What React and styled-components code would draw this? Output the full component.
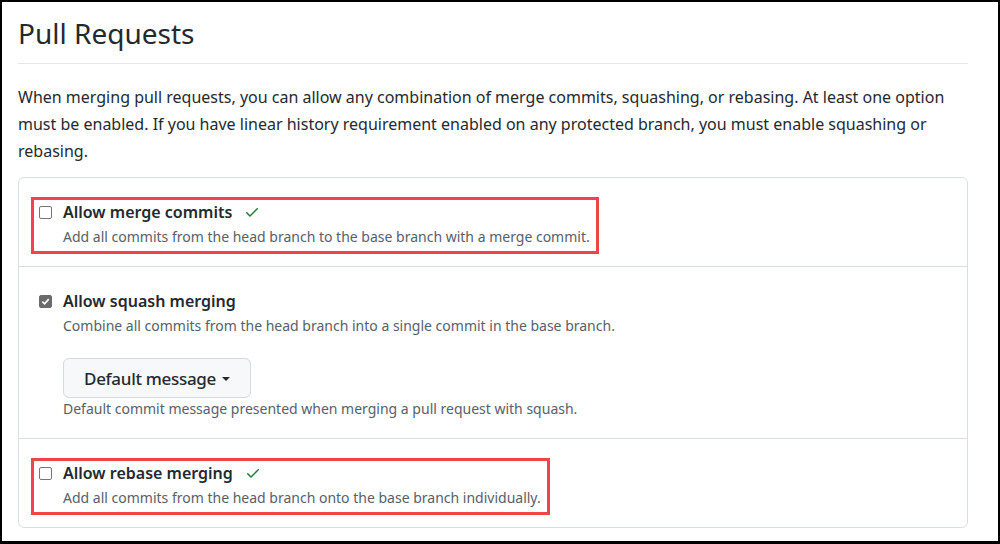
import React from "react";
import styled, { createGlobalStyle } from "styled-components";

const GlobalStyle = createGlobalStyle`
  html, body {
    margin: 0;
    padding: 0;
    background: #fff;
  }
  body {
    font-family: "Noto Sans", "Open Sans", sans-serif;
    color: #24292f;
  }
`;

const Page = styled.div`
  box-sizing: border-box;
  width: 1000px;
  height: 544px;
  border: 2px solid #000;
  border-bottom-width: 3px;
  padding: 0 30px 0 16px;
  overflow: hidden;
`;

const Heading = styled.h2`
  margin: 0;
  padding: 11px 0 10px;
  font-size: 28px;
  font-weight: 400;
  line-height: 40px;
  border-bottom: 1px solid #e4e6e9;
`;

const Intro = styled.p`
  margin: 20px 0 12px;
  font-size: 16px;
  line-height: 27px;
`;

const Box = styled.div`
  border: 1px solid #d8dee4;
  border-radius: 6px;
`;

const Section = styled.div`
  padding: 19px 12px 12px;
  & + & {
    border-top: 1px solid #d8dee4;
  }
`;

const Frame = styled.div`
  display: inline-grid;
  grid-template-columns: 24px auto;
  border: 3px solid ${(p) => (p.$marked ? "#f0434a" : "transparent")};
  padding: 1px 6px 4px 5px;
`;

const Check = styled.span`
  box-sizing: border-box;
  width: 13px;
  height: 13px;
  margin-top: 5px;
  border-radius: 2px;
  border: 1px solid ${(p) => (p.$on ? "#6b6b6b" : "#777")};
  background: ${(p) => (p.$on ? "#6b6b6b" : "#fff")};
  display: flex;
  align-items: center;
  justify-content: center;
`;

const Body = styled.div`
  display: flex;
  flex-direction: column;
  align-items: flex-start;
`;

const Title = styled.div`
  display: flex;
  align-items: center;
  gap: 12px;
  font-size: 16px;
  font-weight: 600;
  line-height: 22px;
`;

const Note = styled.div`
  margin-top: ${(p) => p.$gap || 4}px;
  font-size: 14px;
  line-height: 20px;
  color: #57606a;
`;

const Button = styled.button`
  margin-top: 22px;
  height: 40px;
  padding: 0 20px;
  display: flex;
  align-items: center;
  gap: 6px;
  font-family: inherit;
  font-size: 17px;
  letter-spacing: -0.3px;
  font-weight: 500;
  color: #24292f;
  background: #f6f8fa;
  border: 1px solid #d5d8dc;
  border-radius: 6px;
`;

const Caret = styled.span`
  width: 0;
  height: 0;
  margin-top: 2px;
  border-left: 4px solid transparent;
  border-right: 4px solid transparent;
  border-top: 4px solid #24292f;
`;

const Tick = () => (
  <svg width="16" height="16" viewBox="0 0 16 16" fill="#1a7f37">
    <path d="M13.78 4.22a.75.75 0 0 1 0 1.06l-7.25 7.25a.75.75 0 0 1-1.06 0L2.22 9.28a.75.75 0 0 1 1.06-1.06L6 10.94l6.72-6.72a.75.75 0 0 1 1.06 0Z" />
  </svg>
);

const Box13 = ({ on }) => (
  <Check $on={on}>
    {on && (
      <svg width="9" height="9" viewBox="0 0 10 10">
        <path d="M1.5 5.2 4 7.6 8.6 2.4" fill="none" stroke="#fff" strokeWidth="1.8" />
      </svg>
    )}
  </Check>
);

const Option = ({ marked, on, title, tick, children }) => (
  <Frame $marked={marked}>
    <Box13 on={on} />
    <Body>
      <Title>
        {title}
        {tick && <Tick />}
      </Title>
      {children}
    </Body>
  </Frame>
);

export default function App() {
  return (
    <>
      <GlobalStyle />
      <Page>
        <Heading>Pull Requests</Heading>
        <Intro>
          When merging pull requests, you can allow any combination of merge commits, squashing, or
          rebasing. At least one option must be enabled. If you have linear history requirement
          enabled on any protected branch, you must enable squashing or rebasing.
        </Intro>
        <Box>
          <Section>
            <Option marked tick title="Allow merge commits">
              <Note>Add all commits from the head branch to the base branch with a merge commit.</Note>
            </Option>
          </Section>
          <Section>
            <Option on title="Allow squash merging">
              <Note>Combine all commits from the head branch into a single commit in the base branch.</Note>
              <Button>
                Default message <Caret />
              </Button>
              <Note $gap={1}>Default commit message presented when merging a pull request with squash.</Note>
            </Option>
          </Section>
          <Section>
            <Option marked tick title="Allow rebase merging">
              <Note>Add all commits from the head branch onto the base branch individually.</Note>
            </Option>
          </Section>
        </Box>
      </Page>
    </>
  );
}
